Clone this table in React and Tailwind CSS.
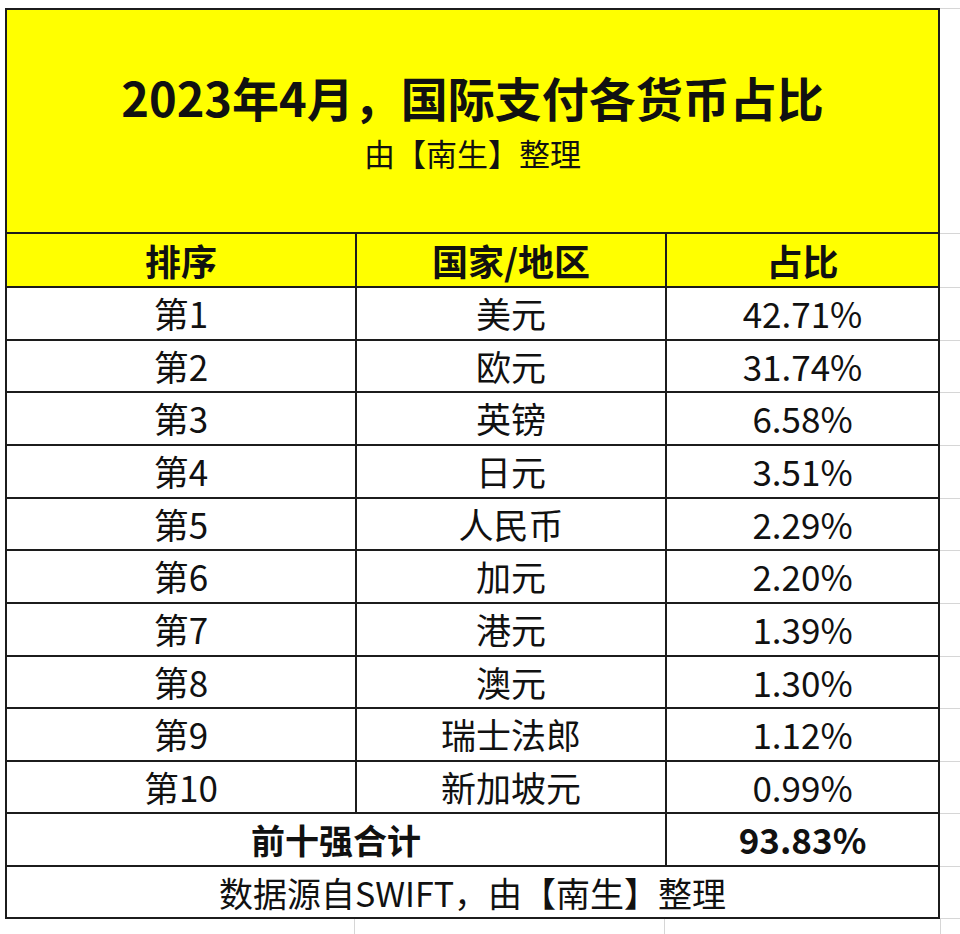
const rows = [
  ["第1", "美元", "42.71%", "h-[53px]"],
  ["第2", "欧元", "31.74%", "h-[52px]"],
  ["第3", "英镑", "6.58%", "h-[53px]"],
  ["第4", "日元", "3.51%", "h-[53px]"],
  ["第5", "人民币", "2.29%", "h-[52px]"],
  ["第6", "加元", "2.20%", "h-[53px]"],
  ["第7", "港元", "1.39%", "h-[53px]"],
  ["第8", "澳元", "1.30%", "h-[52px]"],
  ["第9", "瑞士法郎", "1.12%", "h-[53px]"],
  ["第10", "新加坡元", "0.99%", "h-[52px]"],
];

function Row({ height, children }) {
  return (
    <div className={`flex ${height}`}>
      <div className="flex w-[935px] border-b-2 border-l-2 border-[#1c1c1c]">{children}</div>
      <div className="flex-1 border-b border-[#d6d6d6]" />
    </div>
  );
}

export default function App() {
  return (
    <div
      className="h-[934px] w-[960px] overflow-hidden bg-white pl-[5px] pt-[8px] text-[#111]"
      style={{ fontFamily: '"Noto Sans CJK SC", "Noto Sans", sans-serif' }}
    >
      <div className="flex">
        <div className="w-[935px] border-t-2 border-[#1c1c1c]" />
        <div className="flex-1 border-t border-[#d6d6d6]" />
      </div>

      {/* title block */}
      <Row height="h-[224px]">
        <div className="flex flex-1 flex-col items-center border-r-2 border-[#1c1c1c] bg-[#ffff00] pt-[58px]">
          <div className="text-[47px] font-bold leading-[58px]">2023年4月，国际支付各货币占比</div>
          <div className="mt-[7px] text-[31px] leading-[40px]">由【南生】整理</div>
        </div>
      </Row>

      {/* header */}
      <Row height="h-[54px]">
        <div className="flex w-[350px] items-center justify-center border-r-2 border-[#1c1c1c] bg-[#ffff00] text-[36px] font-bold">排序</div>
        <div className="flex w-[310px] items-center justify-center border-r-2 border-[#1c1c1c] bg-[#ffff00] text-[36px] font-bold">国家/地区</div>
        <div className="flex flex-1 items-center justify-center border-r-2 border-[#1c1c1c] bg-[#ffff00] text-[36px] font-bold">占比</div>
      </Row>

      {rows.map(([rank, name, pct, h]) => (
        <Row key={rank} height={h}>
          <div className="flex w-[350px] items-center justify-center border-r-2 border-[#1c1c1c] text-[35px]">{rank}</div>
          <div className="flex w-[310px] items-center justify-center border-r-2 border-[#1c1c1c] text-[35px]">{name}</div>
          <div className="flex flex-1 items-center justify-center border-r-2 border-[#1c1c1c] text-[35px]">{pct}</div>
        </Row>
      ))}

      <Row height="h-[53px]">
        <div className="flex w-[660px] items-center justify-center border-r-2 border-[#1c1c1c] text-[34px] font-bold">前十强合计</div>
        <div className="flex flex-1 items-center justify-center border-r-2 border-[#1c1c1c] text-[35px] font-bold">93.83%</div>
      </Row>

      <Row height="h-[52px]">
        <div className="flex flex-1 items-center justify-center border-r-2 border-[#1c1c1c] text-[34px]">数据源自SWIFT，由【南生】整理</div>
      </Row>

      {/* spreadsheet grid below */}
      <div className="flex h-[40px]">
        <div className="w-[350px] border-r border-[#d6d6d6]" />
        <div className="w-[310px] border-r border-[#d6d6d6]" />
        <div className="w-[276px] border-r border-[#d6d6d6]" />
      </div>
    </div>
  );
}
